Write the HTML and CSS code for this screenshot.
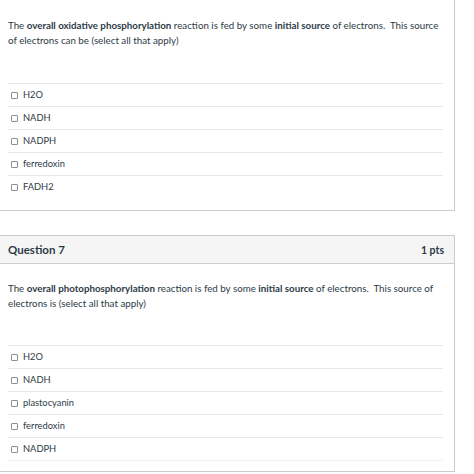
FILE: index.html
```html
<!DOCTYPE html>
<html>
<head>
<meta charset="utf-8">
<link rel="stylesheet" href="styles.css">
</head>
<body>
<div class="page">
  <section class="card card-first">
    <div class="body">
      <p class="question-text">The <strong>overall oxidative phosphorylation</strong> reaction is fed by some <strong>initial source</strong> of electrons.&nbsp; This source of electrons can be (select all that apply)</p>
      <div class="answers">
        <label class="answer"><span class="box"></span><span class="label">H2O</span></label>
        <label class="answer"><span class="box"></span><span class="label">NADH</span></label>
        <label class="answer"><span class="box"></span><span class="label">NADPH</span></label>
        <label class="answer"><span class="box"></span><span class="label">ferredoxin</span></label>
        <label class="answer"><span class="box"></span><span class="label">FADH2</span></label>
      </div>
    </div>
  </section>

  <section class="card card-second">
    <header class="head">
      <h3 class="title">Question 7</h3>
      <span class="pts">1 pts</span>
    </header>
    <div class="body">
      <p class="question-text">The <strong>overall photophosphorylation</strong> reaction is fed by some <strong>initial source</strong> of electrons.&nbsp; This source of electrons is (select all that apply)</p>
      <div class="answers">
        <label class="answer"><span class="box"></span><span class="label">H2O</span></label>
        <label class="answer"><span class="box"></span><span class="label">NADH</span></label>
        <label class="answer"><span class="box"></span><span class="label">plastocyanin</span></label>
        <label class="answer"><span class="box"></span><span class="label">ferredoxin</span></label>
        <label class="answer answer-last"><span class="box"></span><span class="label">NADPH</span></label>
      </div>
    </div>
  </section>
</div>
</body>
</html>
```
FILE: styles.css
```css
html, body {
  margin: 0;
  padding: 0;
  background: #ffffff;
}

body {
  font-family: Lato, "Open Sans", "Liberation Sans", sans-serif;
  color: #2d3b45;
  font-size: 10px;
}

.page {
  width: 455px;
}

.card {
  border-right: 1px solid #c7cdd1;
  border-bottom: 1px solid #c7cdd1;
  background: #ffffff;
}

.card-second {
  margin-top: 24px;
  border-top: 1px solid #c7cdd1;
}

.head {
  display: flex;
  align-items: center;
  justify-content: space-between;
  height: 27px;
  padding: 0 10px 0 8px;
  background: #f5f5f5;
  border-bottom: 1px solid #c7cdd1;
}

.title {
  margin: 0;
  font-size: 11.5px;
  font-weight: 700;
  color: #2d3b45;
}

.pts {
  font-size: 10.5px;
  font-weight: 700;
}

.body {
  padding: 18px 11px 12px 8px;
}

.card-second .body {
  padding-top: 17px;
  padding-bottom: 10px;
}

.question-text {
  margin: 0 -4px 35px 0;
  font-size: 9.75px;
  line-height: 15px;
}

.card-second .question-text {
  margin-bottom: 34px;
}

.question-text strong {
  font-weight: 700;
}

.answers {
  display: flex;
  flex-direction: column;
}

.answer {
  display: flex;
  align-items: center;
  gap: 5px;
  height: 22px;
  border-top: 1px solid #e4e6e8;
  padding-left: 3px;
  font-size: 9.3px;
}

.answer-last {
  border-bottom: 1px solid #f0f1f2;
}

.box {
  width: 5px;
  height: 5px;
  border: 1px solid #8a8f94;
  border-radius: 1px;
  background: #fff;
  flex: none;
}

.label {
  line-height: 1;
}
```
